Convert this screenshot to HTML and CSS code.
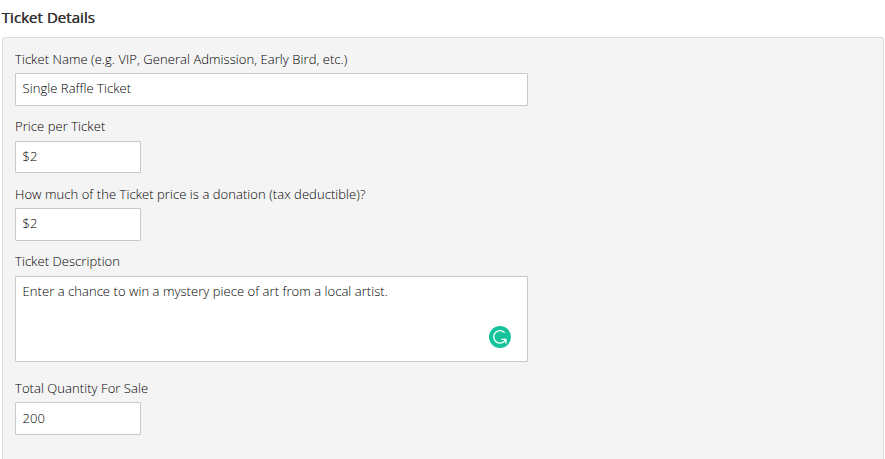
FILE: index.html
```html
<!DOCTYPE html>
<html lang="en">
<head>
    <meta charset="UTF-8">
    <meta name="viewport" content="width=device-width, initial-scale=1.0">
    <title>Ticket Details</title>
    <link rel="stylesheet" href="styles.css">
</head>
<body>
    <h2>Ticket Details</h2>
    <form class="panel" id="ticketForm">
        <label for="name">Ticket Name (e.g. VIP, General Admission, Early Bird, etc.)</label>
        <input type="text" id="name" name="name" class="wide" value="Single Raffle Ticket">

        <label for="price">Price per Ticket</label>
        <input type="text" id="price" name="price" class="price" value="$2">

        <label for="donation">How much of the Ticket price is a donation (tax deductible)?</label>
        <input type="text" id="donation" name="donation" value="$2">

        <label for="description">Ticket Description</label>
        <div class="description">
            <textarea id="description" name="description" spellcheck="false">Enter a chance to win a mystery piece of art from a local artist.</textarea>
            <svg class="checker" viewBox="0 0 22 22" width="22" height="22">
                <circle cx="11" cy="11" r="11" fill="#15c39a"/>
                <path d="M15.7 6.9A6.2 6.2 0 1 0 15.4 15.2L16.6 13.6M12.4 13.4H16.9V17.6" fill="none" stroke="#fff" stroke-width="1.3"/>
            </svg>
        </div>

        <label for="quantity">Total Quantity For Sale</label>
        <input type="text" id="quantity" name="quantity" class="quantity" value="200">
    </form>
</body>
</html>
```
FILE: styles.css
```css
* {
    box-sizing: border-box;
}

body {
    display: flex;
    flex-direction: column;
    height: 100vh;
    font-family: "Open Sans", sans-serif;
    font-size: 13px;
    font-weight: 300;
    letter-spacing: 0.06px;
    background-color: #fff;
    color: #000;
    margin: 0;
    padding: 7px 1px 0 2px;
}

h2 {
    font-size: 15px;
    font-weight: 400;
    line-height: 20px;
    letter-spacing: 0.05px;
    margin: 0 0 10px -0.5px;
    color: #333;
    text-shadow: 0.5px 0 0 #333;
}

.panel {
    flex: 1;
    min-height: 0;
    padding: 12px 12px 0;
    background-color: #f4f4f4;
    border: 1px solid #ddd;
    border-bottom: none;
    border-radius: 3px 3px 0 0;
}

label {
    display: block;
    line-height: 18px;
    margin-bottom: 5px;
}

input[type="text"], textarea {
    display: block;
    width: 126px;
    height: 33px;
    padding: 0 6.6px 3px;
    margin-bottom: 11px;
    border: 1px solid #c8c8c8;
    border-radius: 1px;
    outline: none;
    background-color: #fff;
    color: #000;
    font-family: inherit;
    font-size: 13px;
    font-weight: 300;
    letter-spacing: 0.05px;
}

input.wide {
    width: 513px;
}

/* a little more room under these two labels */
.wide + label,
.panel label[for="description"] {
    margin-bottom: 6px;
}

input.price {
    height: 32px;
    padding-bottom: 2px;
    margin-bottom: 12px;
}

input.quantity {
    padding-bottom: 1px;
    margin-bottom: 0;
}

.description {
    position: relative;
    width: 513px;
    margin-bottom: 17px;
}

textarea {
    width: 100%;
    height: 86px;
    padding: 5px 6.6px;
    margin: 0;
    line-height: 18px;
    resize: none;
}

.checker {
    position: absolute;
    right: 17px;
    bottom: 14px;
}
```
